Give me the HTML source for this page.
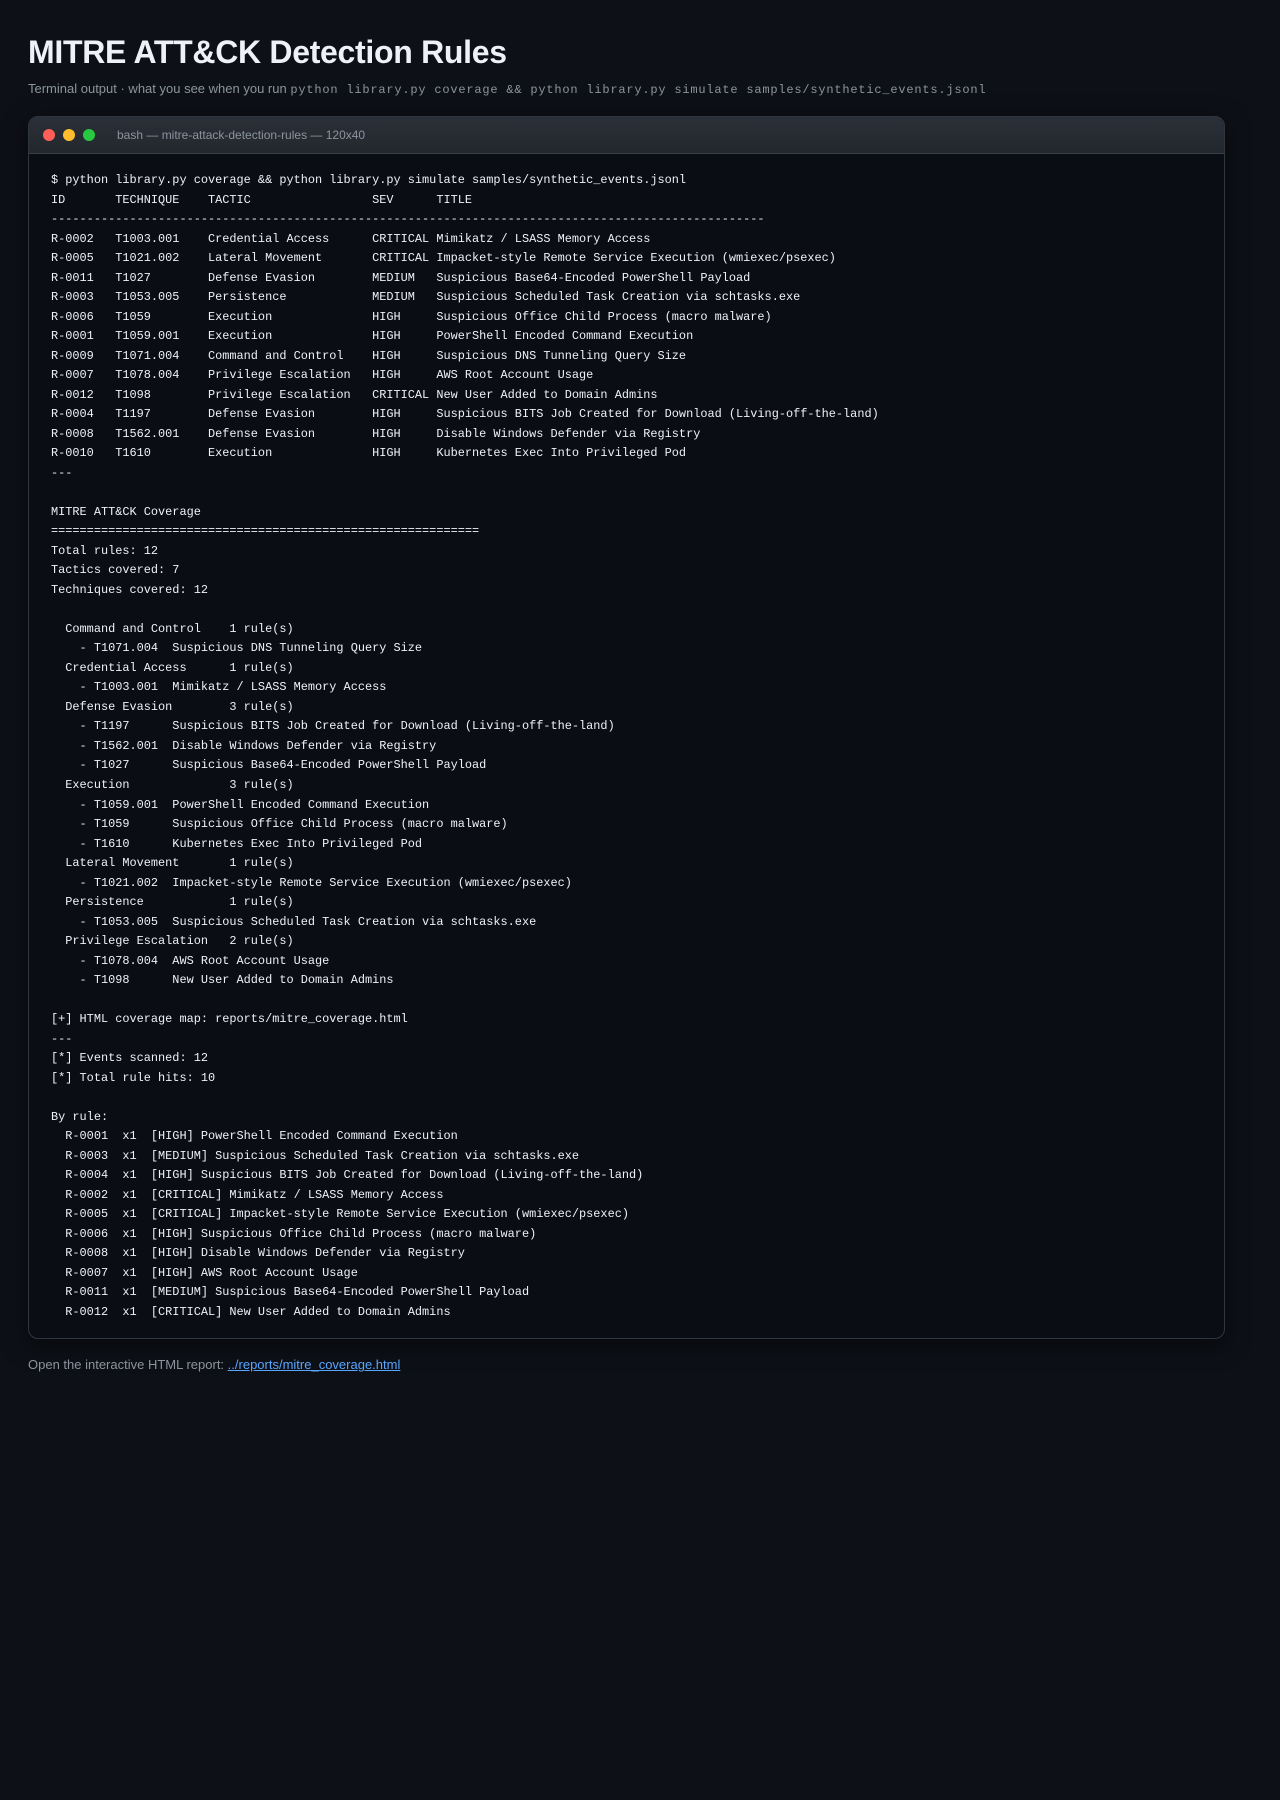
<!DOCTYPE html>
<html><head><meta charset="utf-8">
<style>
html,body{margin:0;padding:0;background:#0d1016;}
body{width:1280px;height:1800px;font-family:"Liberation Sans",sans-serif;color:#e6edf3;}
.wrap{padding:0 28px;width:1197px;}
h1{margin:0;padding-top:32px;font-size:32px;line-height:40px;font-weight:bold;color:#eef2f6;letter-spacing:-0.3px;}
.sub{margin-top:8px;font-size:13px;color:#8b949e;line-height:18px;}
.sub code{font-family:"Liberation Mono",monospace;font-size:12px;letter-spacing:0.8px;}
.term{margin-top:17px;border:1px solid #30363d;border-radius:10px;background:#0a0d13;box-shadow:0 6px 24px rgba(0,0,0,0.5);overflow:hidden;}
.bar{height:36px;background:linear-gradient(#2b3038,#23272e);border-bottom:1px solid #3a4049;display:flex;align-items:center;padding-left:14px;}
.dot{width:12px;height:12px;border-radius:50%;margin-right:8px;}
.bar span.t{margin-left:14px;font-size:12px;color:#8b949e;}
pre{margin:0;padding:17px 22px 16px;font-family:"Liberation Mono",monospace;font-size:11.9px;line-height:19.52px;color:#eef2f6;white-space:pre;}
.foot{margin-top:18px;font-size:13px;color:#8b949e;}
.foot a{color:#58a6ff;text-decoration:underline;}
</style></head><body><div class="wrap">
<h1>MITRE ATT&amp;CK Detection Rules</h1>
<div class="sub">Terminal output · what you see when you run <code>python library.py coverage &amp;&amp; python library.py simulate samples/synthetic_events.jsonl</code></div>
<div class="term">
<div class="bar"><div class="dot" style="background:#ff5f57"></div><div class="dot" style="background:#febc2e"></div><div class="dot" style="background:#28c840"></div><span class="t">bash — mitre-attack-detection-rules — 120x40</span></div>
<pre>$ python library.py coverage &amp;&amp; python library.py simulate samples/synthetic_events.jsonl
ID       TECHNIQUE    TACTIC                 SEV      TITLE
----------------------------------------------------------------------------------------------------
R-0002   T1003.001    Credential Access      CRITICAL Mimikatz / LSASS Memory Access
R-0005   T1021.002    Lateral Movement       CRITICAL Impacket-style Remote Service Execution (wmiexec/psexec)
R-0011   T1027        Defense Evasion        MEDIUM   Suspicious Base64-Encoded PowerShell Payload
R-0003   T1053.005    Persistence            MEDIUM   Suspicious Scheduled Task Creation via schtasks.exe
R-0006   T1059        Execution              HIGH     Suspicious Office Child Process (macro malware)
R-0001   T1059.001    Execution              HIGH     PowerShell Encoded Command Execution
R-0009   T1071.004    Command and Control    HIGH     Suspicious DNS Tunneling Query Size
R-0007   T1078.004    Privilege Escalation   HIGH     AWS Root Account Usage
R-0012   T1098        Privilege Escalation   CRITICAL New User Added to Domain Admins
R-0004   T1197        Defense Evasion        HIGH     Suspicious BITS Job Created for Download (Living-off-the-land)
R-0008   T1562.001    Defense Evasion        HIGH     Disable Windows Defender via Registry
R-0010   T1610        Execution              HIGH     Kubernetes Exec Into Privileged Pod
---

MITRE ATT&amp;CK Coverage
============================================================
Total rules: 12
Tactics covered: 7
Techniques covered: 12

  Command and Control    1 rule(s)
    - T1071.004  Suspicious DNS Tunneling Query Size
  Credential Access      1 rule(s)
    - T1003.001  Mimikatz / LSASS Memory Access
  Defense Evasion        3 rule(s)
    - T1197      Suspicious BITS Job Created for Download (Living-off-the-land)
    - T1562.001  Disable Windows Defender via Registry
    - T1027      Suspicious Base64-Encoded PowerShell Payload
  Execution              3 rule(s)
    - T1059.001  PowerShell Encoded Command Execution
    - T1059      Suspicious Office Child Process (macro malware)
    - T1610      Kubernetes Exec Into Privileged Pod
  Lateral Movement       1 rule(s)
    - T1021.002  Impacket-style Remote Service Execution (wmiexec/psexec)
  Persistence            1 rule(s)
    - T1053.005  Suspicious Scheduled Task Creation via schtasks.exe
  Privilege Escalation   2 rule(s)
    - T1078.004  AWS Root Account Usage
    - T1098      New User Added to Domain Admins

[+] HTML coverage map: reports/mitre_coverage.html
---
[*] Events scanned: 12
[*] Total rule hits: 10

By rule:
  R-0001  x1  [HIGH] PowerShell Encoded Command Execution
  R-0003  x1  [MEDIUM] Suspicious Scheduled Task Creation via schtasks.exe
  R-0004  x1  [HIGH] Suspicious BITS Job Created for Download (Living-off-the-land)
  R-0002  x1  [CRITICAL] Mimikatz / LSASS Memory Access
  R-0005  x1  [CRITICAL] Impacket-style Remote Service Execution (wmiexec/psexec)
  R-0006  x1  [HIGH] Suspicious Office Child Process (macro malware)
  R-0008  x1  [HIGH] Disable Windows Defender via Registry
  R-0007  x1  [HIGH] AWS Root Account Usage
  R-0011  x1  [MEDIUM] Suspicious Base64-Encoded PowerShell Payload
  R-0012  x1  [CRITICAL] New User Added to Domain Admins</pre>
</div>
<div class="foot">Open the interactive HTML report: <a>../reports/mitre_coverage.html</a></div>
</div></body></html>
